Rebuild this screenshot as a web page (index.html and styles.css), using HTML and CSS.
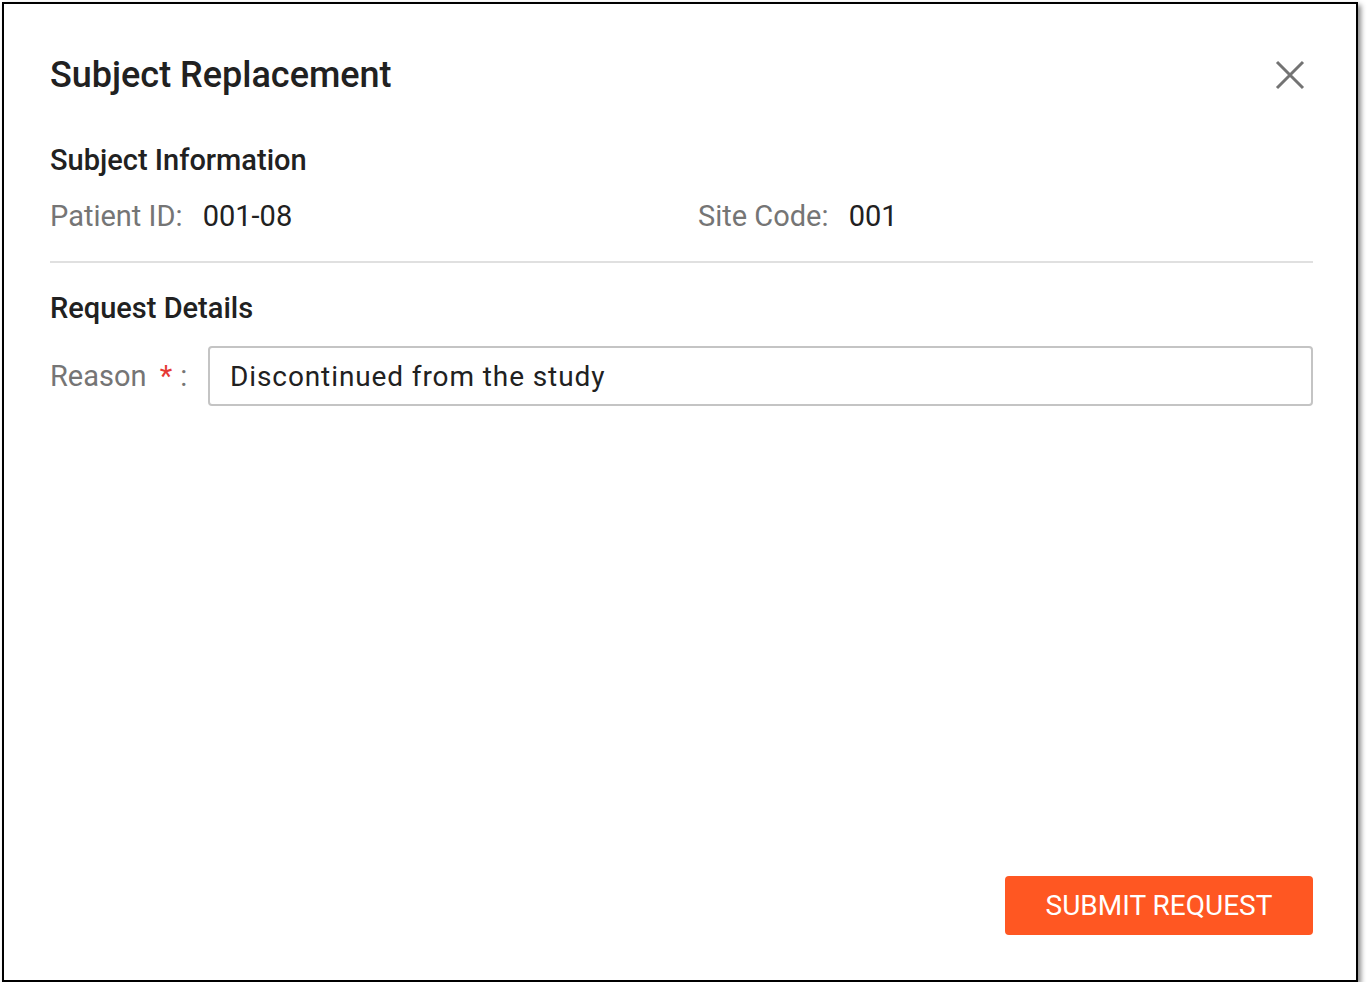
FILE: index.html
```html
<!DOCTYPE html>
<html lang="en">
<head>
    <meta charset="UTF-8">
    <meta name="viewport" content="width=device-width, initial-scale=1.0">
    <title>Subject Replacement</title>
    <link rel="stylesheet" href="styles.css">
</head>
<body>
    <div class="dialog">
        <div class="dialog-header">
            <h1>Subject Replacement</h1>
            <button class="close" type="button" aria-label="Close">
                <svg width="30" height="30" viewBox="0 0 30 30">
                    <path d="M2 2 L28 28 M28 2 L2 28" stroke="#737373" stroke-width="3" fill="none"/>
                </svg>
            </button>
        </div>

        <h2>Subject Information</h2>
        <div class="info-row">
            <div class="info-item">
                <span class="label">Patient ID:</span>
                <span class="value">001-08</span>
            </div>
            <div class="info-item">
                <span class="label">Site Code:</span>
                <span class="value">001</span>
            </div>
        </div>

        <hr class="divider">

        <h2>Request Details</h2>
        <div class="field">
            <label for="reason">Reason <span class="required">*</span>:</label>
            <input type="text" id="reason" value="Discontinued from the study">
        </div>

        <div class="actions">
            <button type="submit" class="submit">SUBMIT REQUEST</button>
        </div>
    </div>
</body>
</html>
```

FILE: styles.css
```css
body {
    font-family: Roboto, 'Liberation Sans', sans-serif;
    background-color: #ffffff;
    margin: 0;
    padding: 2px 0 0 2px;
}
.dialog {
    box-sizing: border-box;
    width: 1356px;
    height: 980px;
    border: 2px solid #000000;
    box-shadow: 3px 3px 5px rgba(0, 0, 0, 0.45);
    padding: 51px 43px 45px 46px;
    display: flex;
    flex-direction: column;
    background-color: #ffffff;
}
.dialog-header {
    display: flex;
    justify-content: space-between;
    align-items: center;
    height: 40px;
}
h1 {
    font-size: 36px;
    font-weight: 500;
    color: #212121;
    margin: 0;
}
.close {
    background: none;
    border: none;
    padding: 0;
    margin-right: 8px;
    cursor: pointer;
    display: flex;
}
h2 {
    font-size: 29px;
    font-weight: 500;
    color: #212121;
    margin: 0;
    line-height: 32px;
}
.dialog-header + h2 {
    margin-top: 49px;
}
.info-row {
    display: flex;
    margin-top: 24px;
}
.info-item {
    width: 648px;
    flex-shrink: 0;
    font-size: 29px;
    line-height: 32px;
}
.label {
    color: #757575;
    margin-right: 13px;
}
.value {
    color: #212121;
}
.divider {
    border: none;
    border-top: 2px solid #e0e0e0;
    margin: 29px 0 29px 0;
}
.field {
    display: flex;
    align-items: center;
    margin-top: 22px;
}
.field label {
    font-size: 29px;
    color: #757575;
    width: 158px;
    flex-shrink: 0;
}
.required {
    color: #e53935;
    margin-left: 6px;
    margin-right: 8px;
}
.field input {
    flex: 1;
    box-sizing: border-box;
    height: 60px;
    border: 2px solid #c4c4c4;
    border-radius: 4px;
    padding: 0 20px;
    font-family: Roboto, 'Liberation Sans', sans-serif;
    font-size: 28px;
    letter-spacing: 0.9px;
    color: #212121;
}
.actions {
    margin-top: auto;
    display: flex;
    justify-content: flex-end;
}
.submit {
    width: 308px;
    height: 59px;
    background-color: #ff5722;
    color: #ffffff;
    border: none;
    border-radius: 4px;
    font-family: Roboto, 'Liberation Sans', sans-serif;
    font-size: 28px;
    cursor: pointer;
}
```
